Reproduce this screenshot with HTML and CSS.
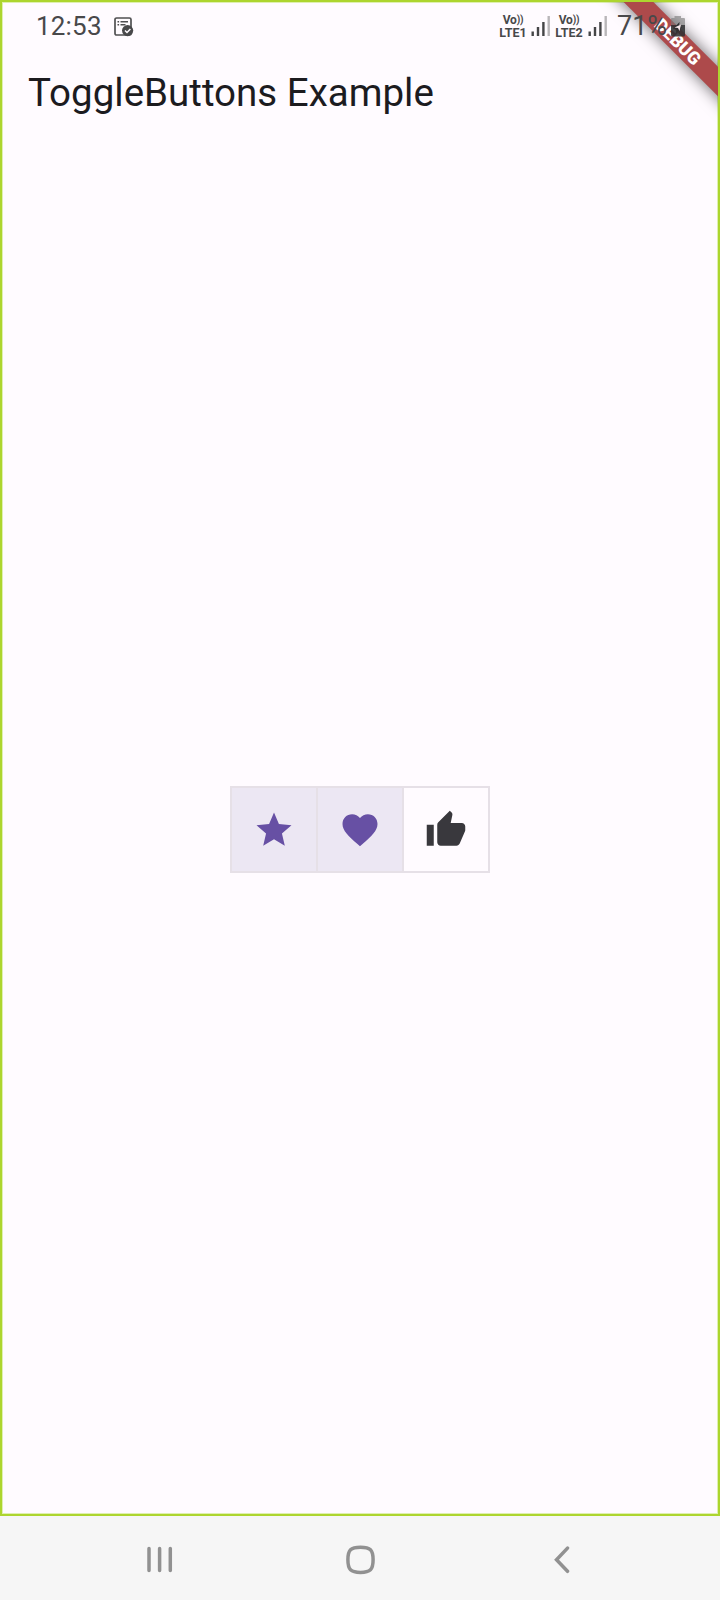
FILE: index.html
```html
<!DOCTYPE html>
<html lang="en">
<head>
<meta charset="utf-8">
<title>ToggleButtons Example</title>
<link rel="stylesheet" href="styles.css">
</head>
<body>
<div class="phone">
  <main class="screen">
    <div class="ribbon-clip"><div class="ribbon">DEBUG</div></div>
    <header class="status">
      <span class="clock">12:53</span>
      <svg class="task" width="20" height="20" viewBox="0 0 20 20">
        <rect x="1" y="1" width="16" height="17" rx="1.6" fill="none" stroke="#505052" stroke-width="1.7"/>
        <path d="M3.500 4.700h1.600M6.500 4.700h7.500M3.500 7.700h1.600M6.500 7.700h5" stroke="#505052" stroke-width="1.5"/>
        <circle cx="13.6" cy="13.6" r="5.6" fill="#48484a"/>
        <path d="M11 13.500l2 2 3.400-3.500" fill="none" stroke="#fffbff" stroke-width="1.5"/>
      </svg>
      <div class="sim first"><span class="vo">Vo<span class="waves">))</span></span><span class="lte">LTE1</span></div>
      <svg class="signal" width="19" height="20" viewBox="0 0 19 20">
        <path d="M1.700 15.500V20M7 11v9M12.400 6v14" stroke="#454547" stroke-width="2.4"/>
        <path d="M17.700 0v20" stroke="#b9b6b9" stroke-width="2.4"/>
      </svg>
      <div class="sim second"><span class="vo">Vo<span class="waves">))</span></span><span class="lte">LTE2</span></div>
      <svg class="signal last" width="19" height="20" viewBox="0 0 19 20">
        <path d="M1.700 15.500V20M7 11v9M12.400 6v14" stroke="#454547" stroke-width="2.4"/>
        <path d="M17.700 0v20" stroke="#b9b6b9" stroke-width="2.4"/>
      </svg>
      <span class="percent">71%</span>
      <svg class="battery" width="14" height="21" viewBox="0 0 14 21">
        <path d="M3.500 0h6.500v2H13q1 0 1 1v6H0V3q0-1 1-1h2.500z" fill="#777" opacity=".6"/>
        <path d="M0 9h14v10q0 1.500-1.500 1.500h-11Q0 20.500 0 19z" fill="#303032" opacity=".88"/>
        <path d="M8.500 6L2 13h4l-1.500 5 6.500-7H8z" fill="#303032"/>
        <path d="M3.500 11.500L10 8.500 8.500 15 7 12z" fill="#f7e7ea"/>
      </svg>
    </header>
    <h1 class="title">ToggleButtons Example</h1>
    <section class="content">
      <div class="toggles">
        <button class="toggle on" aria-label="Star"><svg class="icon" viewBox="0 0 24 24"><path d="M12 17.270L18.180 21l-1.640-7.030L22 9.240l-7.190-.61L12 2 9.190 8.630 2 9.240l5.460 4.730L5.820 21z"/></svg></button>
        <button class="toggle on" aria-label="Favorite"><svg class="icon" viewBox="0 0 24 24"><path d="M12 21.350l-1.450-1.320C5.400 15.360 2 12.280 2 8.500 2 5.420 4.420 3 7.500 3c1.740 0 3.410.81 4.500 2.090C13.090 3.810 14.760 3 16.500 3 19.580 3 22 5.420 22 8.500c0 3.780-3.400 6.860-8.550 11.540z"/></svg></button>
        <button class="toggle" aria-label="Like"><svg class="icon" viewBox="0 0 24 24"><path d="M1 21h4V9H1v12zm22-11c0-1.100-.9-2-2-2h-6.310l.95-4.570.03-.32c0-.41-.17-.79-.44-1.060L14.170 1 7.590 7.590C7.220 7.950 7 8.450 7 9v10c0 1.100.9 2 2 2h9c.83 0 1.540-.5 1.840-1.220l3.020-7.050c.09-.23.14-.47.14-.73z"/></svg></button>
      </div>
    </section>
  </main>
  <nav class="nav">
    <svg width="26" height="28" viewBox="0 0 26 28"><path d="M2 2.500v22M12.600 2.500v22M23.300 2.500v22"/></svg>
    <svg class="home" width="30" height="30" viewBox="0 0 30 30"><path d="M15.500 2.200C25.300 2.200 28.100 5 28.100 14.800S25.300 27.400 15.500 27.400 2.900 24.600 2.900 14.800 5.700 2.200 15.500 2.200z"/></svg>
    <svg class="back" width="18" height="28" viewBox="0 0 18 28"><path d="M15.500 2.100L4.500 13.700l11 11.600"/></svg>
  </nav>
</div>
</body>
</html>
```
FILE: styles.css
```css
* { box-sizing: border-box; }
body { margin: 0; font-family: Roboto, sans-serif; }
.phone { width: 720px; height: 1600px; display: flex; flex-direction: column; background: #f6f6f6; }
.screen { position: relative; height: 1516px; border: 2px solid #add52f; background: #fffbff; box-shadow: inset 0 0 0 1px #dff0b0; display: flex; flex-direction: column; }
.ribbon-clip { position: absolute; top: 0; right: 0; width: 140px; height: 140px; overflow: hidden; }
.ribbon { position: absolute; left: 0; top: 29px; width: 200px; height: 21px; line-height: 21px; text-align: center; color: #fff; background: #ad4a4b; font-size: 17.850px; font-weight: 900; transform: rotate(45deg); box-shadow: 0 0 16px rgba(0,0,0,.6); }
.status { position: relative; height: 56px; padding: 14px 0 0 34px; display: flex; align-items: flex-start; color: #48484a; }
.clock { width: 78px; font-size: 26px; line-height: 21px; letter-spacing: .2px; }
.task { margin-top: 1px; }
.sim { width: 32px; margin-top: -1px; display: flex; flex-direction: column; align-items: center; font-size: 12px; line-height: 11px; font-weight: 700; }
.vo { height: 11px; letter-spacing: -.2px; }
.waves { font-size: 10px; line-height: 10px; vertical-align: 1px; }
.lte { font-size: 12.500px; line-height: 12px; margin-top: 1px; }
.first { margin-left: 363px; }
.second { margin-left: 3px; }
.signal { flex: none; margin-left: 2px; }
.last { margin-left: 3px; }
.percent { width: 54px; margin-left: 10px; font-size: 27px; line-height: 21px; }
.battery { flex: none; }
.title { margin: 0; padding: 12px 26px; font-size: 38.500px; line-height: 46px; font-weight: 400; color: #1c1b1f; }
.content { flex: 1; display: flex; justify-content: center; padding-top: 658px; }
.toggles { display: grid; grid-template-columns: 84px 84px 84px; gap: 2px; align-self: flex-start; border: 2px solid #e6e0e7; background: #e6e0e7; }
.toggle { height: 83px; border: 0; padding: 1px 0 0; background: #fffbff; color: #39383d; display: flex; align-items: center; justify-content: center; }
.on { background: #ece7f3; color: #6750a4; }
.icon { flex: none; width: 42px; height: 42px; fill: currentColor; }
.nav { height: 84px; display: flex; align-items: center; padding: 4px 0 0 147px; }
.nav svg { fill: none; stroke: #919191; stroke-width: 3.500; stroke-linecap: round; }
.home { margin-left: 172px; }
.back { margin-left: 177px; }
```
